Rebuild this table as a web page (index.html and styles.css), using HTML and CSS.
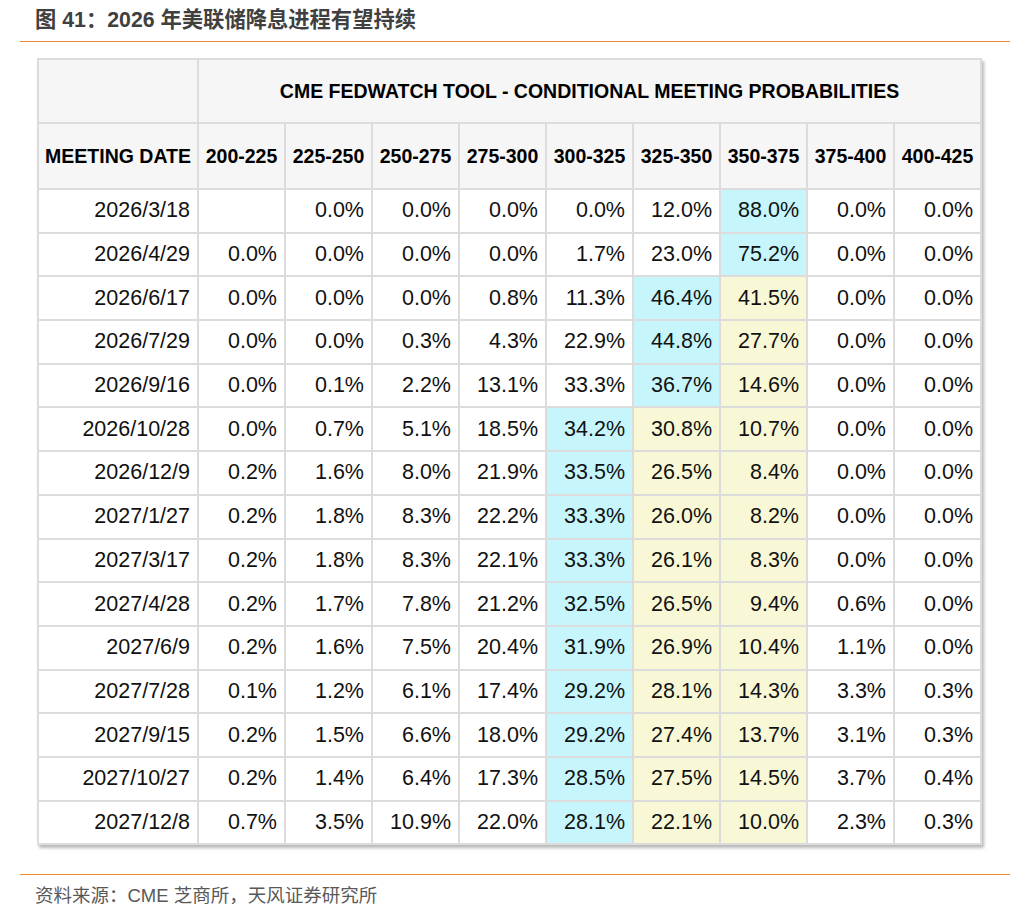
FILE: index.html
```html
<!DOCTYPE html>
<html lang="zh-CN">
<head>
<meta charset="utf-8">
<title>图 41</title>
<link rel="stylesheet" href="styles.css">
</head>
<body>
<div class="page">
  <div class="title">图 41：2026 年美联储降息进程有望持续</div>
  <div class="figure">
    <table class="fed">
      <colgroup>
        <col class="c-date"><col class="c-n"><col class="c-n"><col class="c-n"><col class="c-n"><col class="c-n"><col class="c-n"><col class="c-n"><col class="c-n"><col class="c-n">
      </colgroup>
      <thead>
        <tr class="h1">
          <th class="blank"></th>
          <th colspan="9">CME FEDWATCH TOOL - CONDITIONAL MEETING PROBABILITIES</th>
        </tr>
        <tr class="h2">
          <th>MEETING DATE</th>
          <th>200-225</th><th>225-250</th><th>250-275</th><th>275-300</th><th>300-325</th><th>325-350</th><th>350-375</th><th>375-400</th><th>400-425</th>
        </tr>
      </thead>
      <tbody>
        <tr><td>2026/3/18</td><td></td><td>0.0%</td><td>0.0%</td><td>0.0%</td><td>0.0%</td><td>12.0%</td><td class="cy">88.0%</td><td>0.0%</td><td>0.0%</td></tr>
        <tr><td>2026/4/29</td><td>0.0%</td><td>0.0%</td><td>0.0%</td><td>0.0%</td><td>1.7%</td><td>23.0%</td><td class="cy">75.2%</td><td>0.0%</td><td>0.0%</td></tr>
        <tr><td>2026/6/17</td><td>0.0%</td><td>0.0%</td><td>0.0%</td><td>0.8%</td><td>11.3%</td><td class="cy">46.4%</td><td class="ye">41.5%</td><td>0.0%</td><td>0.0%</td></tr>
        <tr><td>2026/7/29</td><td>0.0%</td><td>0.0%</td><td>0.3%</td><td>4.3%</td><td>22.9%</td><td class="cy">44.8%</td><td class="ye">27.7%</td><td>0.0%</td><td>0.0%</td></tr>
        <tr><td>2026/9/16</td><td>0.0%</td><td>0.1%</td><td>2.2%</td><td>13.1%</td><td>33.3%</td><td class="cy">36.7%</td><td class="ye">14.6%</td><td>0.0%</td><td>0.0%</td></tr>
        <tr><td>2026/10/28</td><td>0.0%</td><td>0.7%</td><td>5.1%</td><td>18.5%</td><td class="cy">34.2%</td><td class="ye">30.8%</td><td class="ye">10.7%</td><td>0.0%</td><td>0.0%</td></tr>
        <tr><td>2026/12/9</td><td>0.2%</td><td>1.6%</td><td>8.0%</td><td>21.9%</td><td class="cy">33.5%</td><td class="ye">26.5%</td><td class="ye">8.4%</td><td>0.0%</td><td>0.0%</td></tr>
        <tr><td>2027/1/27</td><td>0.2%</td><td>1.8%</td><td>8.3%</td><td>22.2%</td><td class="cy">33.3%</td><td class="ye">26.0%</td><td class="ye">8.2%</td><td>0.0%</td><td>0.0%</td></tr>
        <tr><td>2027/3/17</td><td>0.2%</td><td>1.8%</td><td>8.3%</td><td>22.1%</td><td class="cy">33.3%</td><td class="ye">26.1%</td><td class="ye">8.3%</td><td>0.0%</td><td>0.0%</td></tr>
        <tr><td>2027/4/28</td><td>0.2%</td><td>1.7%</td><td>7.8%</td><td>21.2%</td><td class="cy">32.5%</td><td class="ye">26.5%</td><td class="ye">9.4%</td><td>0.6%</td><td>0.0%</td></tr>
        <tr><td>2027/6/9</td><td>0.2%</td><td>1.6%</td><td>7.5%</td><td>20.4%</td><td class="cy">31.9%</td><td class="ye">26.9%</td><td class="ye">10.4%</td><td>1.1%</td><td>0.0%</td></tr>
        <tr><td>2027/7/28</td><td>0.1%</td><td>1.2%</td><td>6.1%</td><td>17.4%</td><td class="cy">29.2%</td><td class="ye">28.1%</td><td class="ye">14.3%</td><td>3.3%</td><td>0.3%</td></tr>
        <tr><td>2027/9/15</td><td>0.2%</td><td>1.5%</td><td>6.6%</td><td>18.0%</td><td class="cy">29.2%</td><td class="ye">27.4%</td><td class="ye">13.7%</td><td>3.1%</td><td>0.3%</td></tr>
        <tr><td>2027/10/27</td><td>0.2%</td><td>1.4%</td><td>6.4%</td><td>17.3%</td><td class="cy">28.5%</td><td class="ye">27.5%</td><td class="ye">14.5%</td><td>3.7%</td><td>0.4%</td></tr>
        <tr><td>2027/12/8</td><td>0.7%</td><td>3.5%</td><td>10.9%</td><td>22.0%</td><td class="cy">28.1%</td><td class="ye">22.1%</td><td class="ye">10.0%</td><td>2.3%</td><td>0.3%</td></tr>
      </tbody>
    </table>
  </div>
  <div class="source">资料来源：CME 芝商所，天风证券研究所</div>
</div>
</body>
</html>
```

FILE: styles.css
```css
html, body {
  margin: 0;
  padding: 0;
  background: #ffffff;
}

.page {
  width: 990px;
  margin-left: 20px;
  font-family: "Liberation Sans", "Noto Sans CJK SC", Arial, sans-serif;
}

.title {
  height: 42px;
  line-height: 40px;
  padding-left: 15px;
  font-size: 21.3px;
  font-weight: bold;
  color: #404040;
  border-bottom: 1.5px solid #e4883a;
  box-sizing: border-box;
}

.figure {
  padding: 16px 0 0 17px;
  height: 832px;
  box-sizing: border-box;
}

.fed {
  border-collapse: separate;
  border-spacing: 0;
  table-layout: fixed;
  width: 945px;
  border-top: 2px solid #dcdcdc;
  border-left: 2px solid #dcdcdc;
  box-shadow: 2px 3px 3px rgba(0, 0, 0, 0.28);
  color: #111;
}

.c-date { width: 160px; }
.c-n { width: 87px; }

.fed th,
.fed td {
  border-right: 2px solid #dcdcdc;
  border-bottom: 2px solid #dcdcdc;
  padding: 0;
}

.fed th {
  background: #f6f6f6;
  font-size: 19.5px;
  font-weight: bold;
  text-align: center;
  color: #000;
}

.h1 th { height: 64px; box-sizing: border-box; }
.h2 th { height: 66px; box-sizing: border-box; }

.fed td {
  height: 43.7px;
  box-sizing: border-box;
  font-size: 21.5px;
  text-align: right;
  padding-right: 7px;
  background: #ffffff;
}

.fed td.cy { background: #c6f6fc; }
.fed td.ye { background: #f8f8d6; }

.source {
  border-top: 1.5px solid #f08a24;
  padding-left: 15px;
  padding-top: 6px;
  font-size: 18.5px;
  color: #595959;
}
```
